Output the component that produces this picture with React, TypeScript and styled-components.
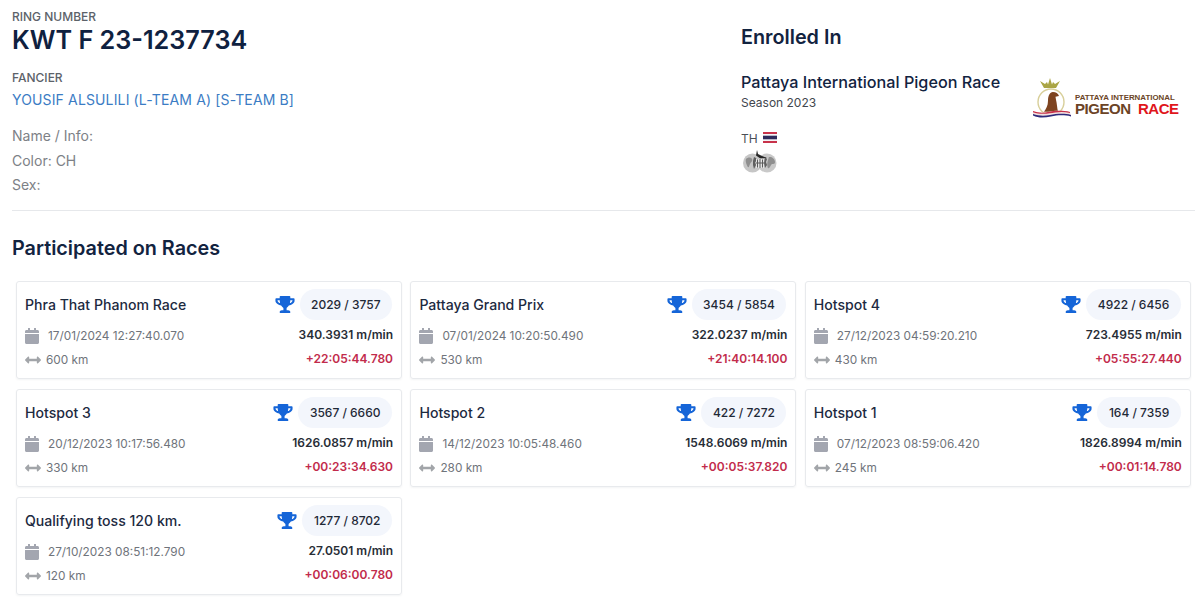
import React from "react";
import styled, { createGlobalStyle } from "styled-components";
import { FaTrophy, FaCalendar, FaArrowsAltH } from "react-icons/fa";

const Global = createGlobalStyle`
  html, body { margin: 0; padding: 0; background: #fff; }
  body { font-family: Inter, "Liberation Sans", sans-serif; color: #12233f; }
`;

const Page = styled.div`
  width: 1200px;
  height: 601px;
  overflow: hidden;
  box-sizing: border-box;
  padding: 10px 5px 0 12px;
`;
const Top = styled.section`
  display: flex;
  height: 200px;
  border-bottom: 1px solid #e6e8eb;
`;
const Left = styled.div`
  width: 729px;
  display: flex;
  flex-direction: column;
`;
const Label = styled.div`
  font-size: 12px;
  line-height: 14px;
  font-weight: 500;
  color: #5c6269;
`;
const Ring = styled.h1`
  margin: 0 0 14px;
  font-size: 25.2px;
  line-height: 33px;
  font-weight: 600;
  color: #0f2140;
`;
const Fancier = styled.a`
  font-size: 14px;
  line-height: 20px;
  letter-spacing: 0.14px;
  margin-top: 5px;
  margin-bottom: 14px;
  color: #3b7cc4;
`;
const Info = styled.div`
  font-size: 14px;
  line-height: 24.5px;
  color: #7d8186;
`;
const Right = styled.div`
  flex: 1;
  padding-top: 15px;
`;
const Heading = styled.h2<{ $mb: number }>`
  margin: 0 0 ${(p) => p.$mb}px;
  font-size: 19.8px;
  line-height: 24px;
  font-weight: 600;
  color: #12233f;
`;
const EventRow = styled.div`
  display: flex;
  align-items: flex-start;
`;
const EventText = styled.div`
  width: 291px;
`;
const EventName = styled.div`
  font-size: 16.2px;
  line-height: 20px;
  font-weight: 500;
  color: #12233f;
`;
const Season = styled.div`
  margin-top: 3px;
  font-size: 12px;
  line-height: 15px;
  color: #42474e;
`;
const Logo = styled.div`
  display: flex;
  align-items: center;
  gap: 3px;
  margin-top: 6px;
`;
const LogoText = styled.div`
  display: flex;
  flex-direction: column;
  font-family: "Liberation Sans", sans-serif;
  font-weight: 700;
  color: #6b4426;
  margin-top: 12px;
`;
const LogoSmall = styled.span`
  font-size: 7.9px;
  line-height: 8px;
  white-space: nowrap;
`;
const LogoBig = styled.span`
  font-size: 15px;
  line-height: 14px;
  letter-spacing: -0.45px;
  word-spacing: 3.5px;
  white-space: nowrap;
  em { font-style: normal; color: #e0161c; }
`;
const Country = styled.div`
  display: flex;
  align-items: center;
  gap: 5px;
  margin-top: 11px;
  font-size: 12px;
  line-height: 16px;
  color: #4b5057;
`;
const FlagSvg = styled.svg`
  margin-bottom: 3px;
`;
const GlobeSvg = styled.svg`
  display: block;
  margin-top: 3px;
`;
const Section = styled.section`
  padding-top: 25px;
`;
const Grid = styled.div`
  display: grid;
  grid-template-columns: repeat(3, 386px);
  column-gap: 8.4px;
  row-gap: 10px;
  margin: 21px 0 0 4px;
`;
const Card = styled.article`
  box-sizing: border-box;
  height: 98px;
  padding: 7px 8px;
  border: 1px solid #e8eaed;
  border-radius: 3px;
  box-shadow: 0 1px 2px rgba(20, 30, 50, 0.05);
  display: flex;
  flex-direction: column;
`;
const CardHead = styled.div`
  display: flex;
  align-items: center;
  justify-content: space-between;
  height: 31px;
`;
const Title = styled.h3`
  margin: 0;
  font-size: 14.1px;
  font-weight: 500;
  color: #1d2a3f;
`;
const Score = styled.div`
  display: flex;
  align-items: center;
  gap: 5px;
  margin-right: 1px;
`;
const Trophy = styled(FaTrophy)`
  width: 20px;
  height: 17px;
  color: #1565d8;
`;
const Pill = styled.div`
  padding: 0 11.5px;
  height: 31px;
  line-height: 31px;
  border-radius: 16px;
  background: #f3f6fc;
  font-size: 12px;
  font-weight: 500;
  color: #1f2937;
`;
const Meta = styled.div<{ $h: number }>`
  display: flex;
  align-items: center;
  justify-content: space-between;
  height: ${(p) => p.$h}px;
`;
const MetaLeft = styled.div<{ $gap: number }>`
  display: flex;
  align-items: center;
  gap: ${(p) => p.$gap}px;
  font-size: 11.8px;
  color: #6f747b;
`;
const Cal = styled(FaCalendar)`
  width: 14px;
  height: 16px;
  color: #a3a6b0;
`;
const Arrow = styled(FaArrowsAltH)`
  width: 16px;
  height: 16px;
  color: #a2a5a9;
`;
const Speed = styled.span`
  margin-bottom: 2px;
  font-size: 12px;
  font-weight: 600;
  color: #272d36;
`;
const Delta = styled.span`
  margin-bottom: 4px;
  font-size: 12px;
  font-weight: 600;
  color: #c22b4b;
`;

const races = [
  ["Phra That Phanom Race", "2029 / 3757", "17/01/2024 12:27:40.070", "600 km", "340.3931 m/min", "+22:05:44.780"],
  ["Pattaya Grand Prix", "3454 / 5854", "07/01/2024 10:20:50.490", "530 km", "322.0237 m/min", "+21:40:14.100"],
  ["Hotspot 4", "4922 / 6456", "27/12/2023 04:59:20.210", "430 km", "723.4955 m/min", "+05:55:27.440"],
  ["Hotspot 3", "3567 / 6660", "20/12/2023 10:17:56.480", "330 km", "1626.0857 m/min", "+00:23:34.630"],
  ["Hotspot 2", "422 / 7272", "14/12/2023 10:05:48.460", "280 km", "1548.6069 m/min", "+00:05:37.820"],
  ["Hotspot 1", "164 / 7359", "07/12/2023 08:59:06.420", "245 km", "1826.8994 m/min", "+00:01:14.780"],
  ["Qualifying toss 120 km.", "1277 / 8702", "27/10/2023 08:51:12.790", "120 km", "27.0501 m/min", "+00:06:00.780"],
];

const Flag = () => (
  <FlagSvg width="14" height="11" viewBox="0 0 14 11">
    <rect width="14" height="11" fill="#c8324a" />
    <rect y="2" width="14" height="7" fill="#f4f4f6" />
    <rect y="3.7" width="14" height="3.6" fill="#2d2a5a" />
  </FlagSvg>
);

const Globes = () => (
  <GlobeSvg width="37" height="24" viewBox="0 0 37 24">
    <circle cx="11.500" cy="13" r="9.500" fill="#c6c6c6" />
    <circle cx="26" cy="13" r="9.500" fill="#c9c9c9" />
    <path d="M5 9c2-2 5-2 6 0s-1 3-2 5-1 4-2 3-3-6-2-8zM29 7c2 0 5 2 5 5s-3 1-4 3-2 4-3 3-1-6 0-8 0-3 2-3z" fill="#8f8f8f" />
    <path d="M13 7l2 1 1 3-2 1 1 3-2 4-1-4 0-4zM24 7l2 2-1 3 1 3-2 3-1-5z" fill="#5f5f5f" />
    <path d="M15 9h8v9h-8z" fill="#e4e4e4" />
    <path d="M16.500 9.500v8M19 9v9M21.500 9.500v8M15 13h8" stroke="#5a5a5a" strokeWidth="1" />
    <path d="M16 0l1 4 4 2 5 2-7 .3-4-2.800z" fill="#262626" />
  </GlobeSvg>
);

const LogoMark = () => (
  <svg width="40" height="42" viewBox="0 0 40 42">
    <path d="M12 10L8 3l5 3 2-2 1 2.500L18 0l2 6.500L21 4l2 2 5-3-4 7z" fill="#aaa544" />
    <circle cx="19" cy="24" r="13" fill="#fff" stroke="#d8cf9a" strokeWidth="1.4" />
    <path d="M21 14c3 0 5 1.500 6 4l-3.500 .8 .5 3c1 4 1 8 2 12H12c2-3 4-6 4-11 0-5 2-9 5-8.800z" fill="#7e4420" />
    <path d="M1 33c6 2 10 2 15 1s13-2 22 0l1 4c-8-2-14-1-20 0s-12 2-18-1z" fill="#f2dfe0" />
    <path d="M1 33c6 2 10 2 15 1s13-2 22 0v1c-8-2-15-.5-20 .3s-12 1-17-1z" fill="#c8324a" />
    <path d="M1 36c6 2 11 2 17 1s14-2 21 0l0 1.500c-8-2-14-1-20 0s-12 2-18-1z" fill="#2d2a7a" />
  </svg>
);

export default function App() {
  return (
    <Page>
      <Global />
      <Top>
        <Left>
          <Label>RING NUMBER</Label>
          <Ring>KWT F 23-1237734</Ring>
          <Label>FANCIER</Label>
          <Fancier>YOUSIF ALSULILI (L-TEAM A) [S-TEAM B]</Fancier>
          <Info>Name / Info:</Info>
          <Info>Color: CH</Info>
          <Info>Sex:</Info>
        </Left>
        <Right>
          <Heading $mb={23}>Enrolled In</Heading>
          <EventRow>
            <EventText>
              <EventName>Pattaya International Pigeon Race</EventName>
              <Season>Season 2023</Season>
            </EventText>
            <Logo>
              <LogoMark />
              <LogoText>
                <LogoSmall>PATTAYA INTERNATIONAL</LogoSmall>
                <LogoBig>PIGEON <em>RACE</em></LogoBig>
              </LogoText>
            </Logo>
          </EventRow>
          <Country>TH <Flag /></Country>
          <Globes />
        </Right>
      </Top>
      <Section>
        <Heading $mb={0}>Participated on Races</Heading>
        <Grid>
          {races.map((r) => (
            <Card key={r[0]}>
              <CardHead>
                <Title>{r[0]}</Title>
                <Score>
                  <Trophy />
                  <Pill>{r[1]}</Pill>
                </Score>
              </CardHead>
              <Meta $h={31}>
                <MetaLeft $gap={9}><Cal />{r[2]}</MetaLeft>
                <Speed>{r[4]}</Speed>
              </Meta>
              <Meta $h={18}>
                <MetaLeft $gap={5}><Arrow />{r[3]}</MetaLeft>
                <Delta>{r[5]}</Delta>
              </Meta>
            </Card>
          ))}
        </Grid>
      </Section>
    </Page>
  );
}
